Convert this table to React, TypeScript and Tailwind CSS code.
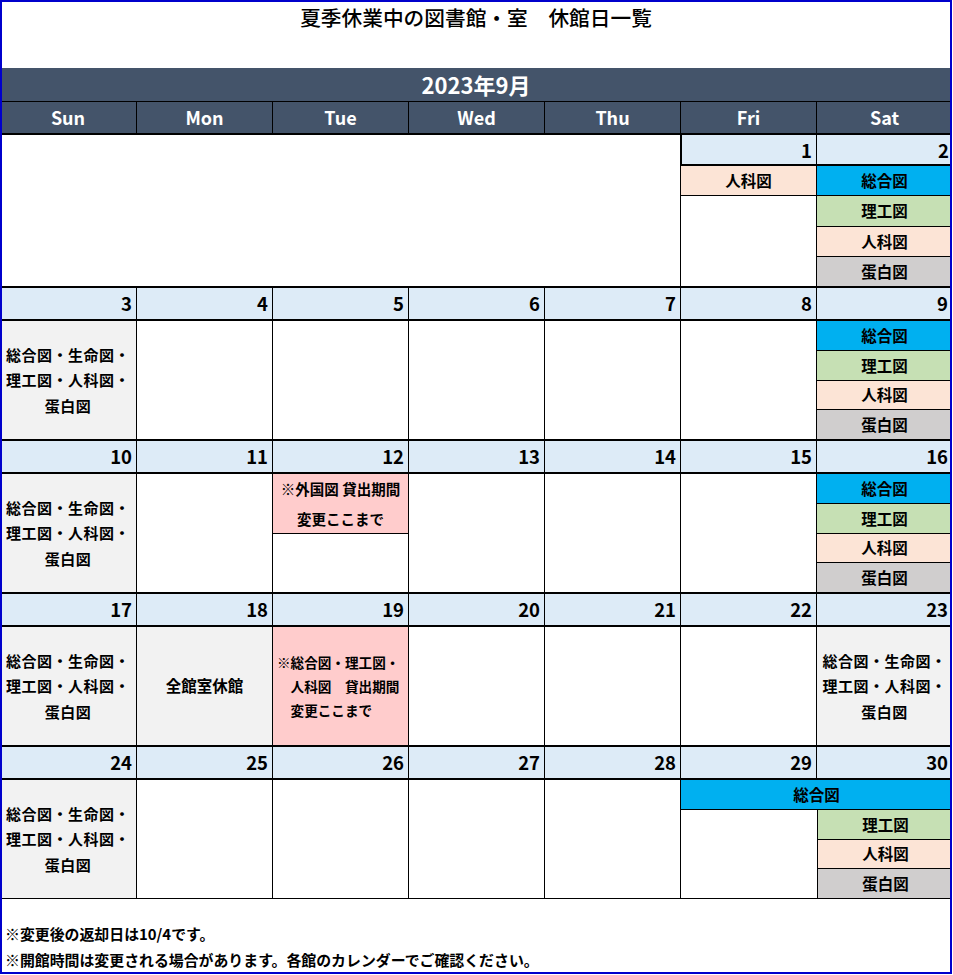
import React from "react";

const SOGO = "bg-[#00b0f0]";
const RIKO = "bg-[#c6e0b4]";
const JINKA = "bg-[#fce4d6]";
const TANPAKU = "bg-[#d0cece]";

type BarItem = { label: string; bg: string };

const ALL4: BarItem[] = [
  { label: "総合図", bg: SOGO },
  { label: "理工図", bg: RIKO },
  { label: "人科図", bg: JINKA },
  { label: "蛋白図", bg: TANPAKU },
];

function Bars({ items }: { items: BarItem[] }) {
  return (
    <div className="flex h-full flex-col">
      {items.map((it, i) => (
        <div
          key={i}
          className={`flex flex-1 items-center justify-center text-[15.5px] font-bold ${it.bg} ${
            i < items.length - 1 ? "border-b border-black" : ""
          }`}
        >
          {it.label}
        </div>
      ))}
    </div>
  );
}

function Closed() {
  return (
    <div className="flex h-full items-center justify-center bg-[#f2f2f2] text-center text-[15px] font-bold leading-[25.5px] tracking-[0.5px]">
      <div>
        総合図・生命図・
        <br />
        理工図・人科図・
        <br />
        蛋白図
      </div>
    </div>
  );
}

function DateCell({ n, first, extra }: { n: number; first?: boolean; extra?: string }) {
  return (
    <div
      className={`h-[31px] w-[136px] shrink-0 bg-[#ddebf7] pr-[4px] text-right text-[18.5px] font-bold leading-[31px] ${
        first ? "" : "border-l border-black"
      } ${extra ?? ""}`}
    >
      {n}
    </div>
  );
}

type Cell = { node?: React.ReactNode; wide?: boolean };

function Week({ dates, cells, last }: { dates: number[]; cells: Cell[]; last?: boolean }) {
  return (
    <div className={`border-t-2 border-black ${last ? "border-b" : ""}`}>
      <div className="flex border-b-2 border-black">
        {dates.map((d, i) => (
          <DateCell key={d} n={d} first={i === 0} />
        ))}
      </div>
      <div className="flex h-[118px]">
        {cells.map((c, i) => (
          <div
            key={i}
            className={`h-full shrink-0 ${c.wide ? "w-[272px]" : "w-[136px]"} ${i === 0 ? "" : "border-l border-black"}`}
          >
            {c.node}
          </div>
        ))}
      </div>
    </div>
  );
}

export default function App() {
  const empty: Cell = {};
  return (
    <div className="relative h-[974px] w-[952px] overflow-hidden bg-white font-['Noto_Sans_CJK_JP',sans-serif] text-black">
      {/* title */}
      <div className="h-[68px] pt-[4px] text-center text-[20.7px] font-medium leading-[26px]">
        夏季休業中の図書館・室　休館日一覧
      </div>

      {/* month band */}
      <div className="flex h-[33px] items-center justify-center bg-[#44546a] text-[22px] font-bold text-white">
        2023年9月
      </div>

      {/* day names */}
      <div className="flex h-[34px] border-t border-b-2 border-black bg-[#44546a] text-[18px] font-bold text-white">
        {["Sun", "Mon", "Tue", "Wed", "Thu", "Fri", "Sat"].map((d, i) => (
          <div
            key={d}
            className={`flex w-[136px] shrink-0 items-center justify-center ${i === 0 ? "" : "border-l border-black"}`}
          >
            {d}
          </div>
        ))}
      </div>

      {/* week 1 */}
      <div className="flex h-[151px]">
        <div className="w-[680px] shrink-0 bg-white" />
        <div className="flex w-[136px] shrink-0 flex-col">
          <DateCell n={1} first extra="border-l-2 border-b-2 border-black" />
          <div className="flex-1 border-l border-black">
            <div className={`flex h-[30px] items-center justify-center border-b border-black ${JINKA} text-[15.5px] font-bold`}>
              人科図
            </div>
          </div>
        </div>
        <div className="flex w-[136px] shrink-0 flex-col border-l border-black">
          <DateCell n={2} first extra="border-b-2 border-black" />
          <div className="flex-1">
            <Bars items={ALL4} />
          </div>
        </div>
      </div>

      {/* week 2 */}
      <Week
        dates={[3, 4, 5, 6, 7, 8, 9]}
        cells={[{ node: <Closed /> }, empty, empty, empty, empty, empty, { node: <Bars items={ALL4} /> }]}
      />

      {/* week 3 */}
      <Week
        dates={[10, 11, 12, 13, 14, 15, 16]}
        cells={[
          { node: <Closed /> },
          empty,
          {
            node: (
              <div className="h-[60px] border-b border-black bg-[#ffcccc] text-center text-[14.5px] font-bold leading-[30px]">
                <div>※外国図 貸出期間</div>
                <div>変更ここまで</div>
              </div>
            ),
          },
          empty,
          empty,
          empty,
          { node: <Bars items={ALL4} /> },
        ]}
      />

      {/* week 4 */}
      <Week
        dates={[17, 18, 19, 20, 21, 22, 23]}
        cells={[
          { node: <Closed /> },
          {
            node: (
              <div className="flex h-full items-center justify-center bg-[#f2f2f2] text-[15.5px] font-bold">
                全館室休館
              </div>
            ),
          },
          {
            node: (
              <div className="flex h-full flex-col justify-center whitespace-pre bg-[#ffcccc] pl-[4px] text-[13.6px] font-bold leading-[24px]">
                <div>※総合図・理工図・</div>
                <div>　人科図　貸出期間</div>
                <div>　変更ここまで</div>
              </div>
            ),
          },
          empty,
          empty,
          empty,
          { node: <Closed /> },
        ]}
      />

      {/* week 5 */}
      <Week
        last
        dates={[24, 25, 26, 27, 28, 29, 30]}
        cells={[
          { node: <Closed /> },
          empty,
          empty,
          empty,
          empty,
          {
            wide: true,
            node: (
              <div className="flex h-full flex-col">
                <div className={`flex h-[30px] shrink-0 items-center justify-center border-b border-black ${SOGO} text-[15.5px] font-bold`}>
                  総合図
                </div>
                <div className="flex flex-1">
                  <div className="w-[136px] shrink-0" />
                  <div className="w-[136px] shrink-0 border-l border-black">
                    <Bars items={ALL4.slice(1)} />
                  </div>
                </div>
              </div>
            ),
          },
        ]}
      />

      {/* footer */}
      <div className="pl-[5px] pt-[22px] text-[14.9px] font-bold leading-[26px]">
        <div>※変更後の返却日は10/4です。</div>
        <div>※開館時間は変更される場合があります。各館のカレンダーでご確認ください。</div>
      </div>

      {/* blue frame */}
      <div className="pointer-events-none absolute inset-0 border-2 border-[#0000cc]" />
    </div>
  );
}
